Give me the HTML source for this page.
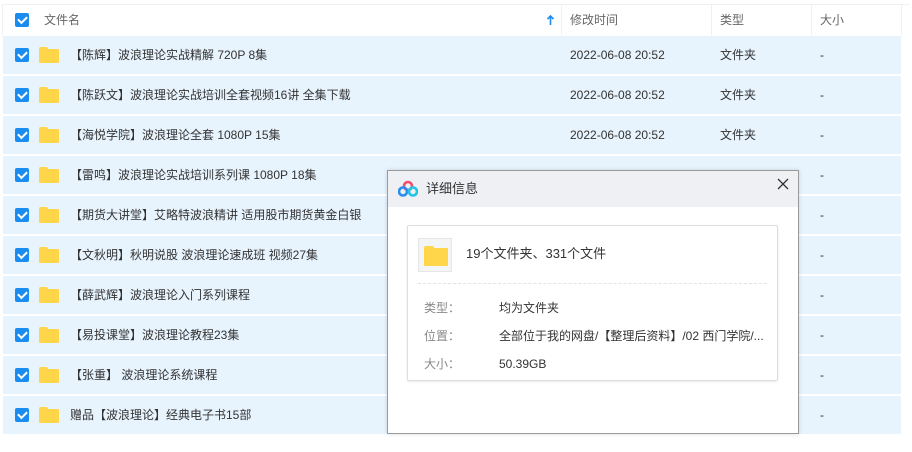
<!DOCTYPE html>
<html><head><meta charset="utf-8">
<style>
*{margin:0;padding:0;box-sizing:border-box}
body{width:912px;height:452px;background:#fff;position:relative;overflow:hidden;font-family:"Liberation Sans","Noto Sans CJK SC",sans-serif;font-size:12px;color:#333}
.hdr{position:absolute;left:2px;top:4px;width:908px;height:31px;border-top:1px solid #eef0f2;border-left:1px solid #eef0f2;color:#666}
.hdr span{position:absolute;top:0;line-height:30px}
.vl{position:absolute;top:0;width:1px;height:30px;background:#eef0f2}
.cb{position:absolute;width:14px;height:14px;background:#1a8cf0;border-radius:2px}
.cb:after{content:"";position:absolute;left:3px;top:3px;width:7px;height:4px;border-left:2px solid #fff;border-bottom:2px solid #fff;transform:rotate(-45deg)}
.row{position:absolute;left:3px;width:898px;height:38px;background:#e7f3fd}
.row span{position:absolute;top:0;line-height:38px;white-space:nowrap}
.fd{position:absolute;left:36px;top:11px;width:20px;height:16px}
.fd:before{content:"";position:absolute;left:0;top:0;width:9px;height:4px;background:#ffd54a;border-radius:2px 2px 0 0}
.fd:after{content:"";position:absolute;left:0;top:2px;width:20px;height:14px;background:#ffd54a;border-radius:1px}
.dlg{position:absolute;left:387px;top:170px;width:412px;height:264px;background:#fff;border:1px solid #9a9a9a;box-shadow:0 0 4px rgba(0,0,0,.15)}
.tb{height:36px;background:#eef0f4;position:relative}
.tb .t{position:absolute;left:38px;top:0;line-height:36px;font-size:13px;color:#333}
.box{position:absolute;left:19px;top:54px;width:371px;height:156px;border:1px solid #ddd;border-radius:2px;box-shadow:0 1px 2px rgba(0,0,0,.08)}
.lab,.val{position:absolute;line-height:20px;white-space:nowrap}
.lab{left:16px;color:#888}
.val{left:91px;color:#333}
</style></head><body>
<div class="hdr">
<div class="cb" style="left:12px;top:8px"></div>
<span style="left:41px">文件名</span>
<svg style="position:absolute;left:544px;top:10px" width="7" height="10" viewBox="0 0 7 10"><path d="M3.5 1V10M0.5 4L3.5 1L6.5 4" stroke="#1a8cf0" stroke-width="1.6" fill="none"/></svg>
<div class="vl" style="left:558px"></div>
<span style="left:567px">修改时间</span>
<div class="vl" style="left:708px"></div>
<span style="left:717px">类型</span>
<div class="vl" style="left:808px"></div>
<span style="left:817px">大小</span>
<div class="vl" style="left:898px"></div>
</div>

<div class="row" style="top:36px"><div class="cb" style="left:12px;top:12px"></div><div class="fd"></div><span style="left:67px">【陈辉】波浪理论实战精解 720P 8集</span><span style="left:567px">2022-06-08 20:52</span><span style="left:717px">文件夹</span><span style="left:817px">-</span></div>
<div class="row" style="top:76px"><div class="cb" style="left:12px;top:12px"></div><div class="fd"></div><span style="left:67px">【陈跃文】波浪理论实战培训全套视频16讲 全集下载</span><span style="left:567px">2022-06-08 20:52</span><span style="left:717px">文件夹</span><span style="left:817px">-</span></div>
<div class="row" style="top:116px"><div class="cb" style="left:12px;top:12px"></div><div class="fd"></div><span style="left:67px">【海悦学院】波浪理论全套 1080P 15集</span><span style="left:567px">2022-06-08 20:52</span><span style="left:717px">文件夹</span><span style="left:817px">-</span></div>
<div class="row" style="top:156px"><div class="cb" style="left:12px;top:12px"></div><div class="fd"></div><span style="left:67px">【雷鸣】波浪理论实战培训系列课 1080P 18集</span><span style="left:817px">-</span></div>
<div class="row" style="top:196px"><div class="cb" style="left:12px;top:12px"></div><div class="fd"></div><span style="left:67px">【期货大讲堂】艾略特波浪精讲 适用股市期货黄金白银</span><span style="left:817px">-</span></div>
<div class="row" style="top:236px"><div class="cb" style="left:12px;top:12px"></div><div class="fd"></div><span style="left:67px">【文秋明】秋明说股 波浪理论速成班 视频27集</span><span style="left:817px">-</span></div>
<div class="row" style="top:276px"><div class="cb" style="left:12px;top:12px"></div><div class="fd"></div><span style="left:67px">【薛武辉】波浪理论入门系列课程</span><span style="left:817px">-</span></div>
<div class="row" style="top:316px"><div class="cb" style="left:12px;top:12px"></div><div class="fd"></div><span style="left:67px">【易投课堂】波浪理论教程23集</span><span style="left:817px">-</span></div>
<div class="row" style="top:356px"><div class="cb" style="left:12px;top:12px"></div><div class="fd"></div><span style="left:67px">【张重】 波浪理论系统课程</span><span style="left:817px">-</span></div>
<div class="row" style="top:396px"><div class="cb" style="left:12px;top:12px"></div><div class="fd"></div><span style="left:67px">赠品【波浪理论】经典电子书15部</span><span style="left:817px">-</span></div>

<div class="dlg">
<div class="tb">
<svg style="position:absolute;left:10px;top:9px" width="20" height="18" viewBox="0 0 20 18">
<circle cx="10" cy="6" r="4" fill="none" stroke="#f0506e" stroke-width="2.6"/>
<circle cx="5" cy="11.5" r="4" fill="none" stroke="#2a8cf0" stroke-width="2.6"/>
<circle cx="15" cy="11.5" r="4" fill="none" stroke="#1fc4e8" stroke-width="2.6"/>
</svg>
<span class="t">详细信息</span>
<svg style="position:absolute;left:389px;top:7px" width="12" height="12" viewBox="0 0 12 12"><path d="M1 1L11 11M11 1L1 11" stroke="#333" stroke-width="1.3"/></svg>
</div>
<div class="box">
<div style="position:absolute;left:10px;top:12px;width:34px;height:34px;border:1px solid #e6e6e6;background:#f3f5f7">
<div style="position:absolute;left:5px;top:7px;width:10px;height:4px;background:#ffd54a;border-radius:2px 2px 0 0"></div>
<div style="position:absolute;left:5px;top:9px;width:24px;height:18px;background:#ffd54a;border-radius:1px"></div>
</div>
<span style="position:absolute;left:58px;top:18px;line-height:20px;font-size:13px">19个文件夹、331个文件</span>
<div style="position:absolute;left:10px;right:10px;top:57px;border-top:1px dashed #e3e3e3"></div>
<span class="lab" style="top:72px">类型：</span><span class="val" style="top:72px">均为文件夹</span>
<span class="lab" style="top:100px">位置：</span><span class="val" style="top:100px">全部位于我的网盘/【整理后资料】/02 西门学院/...</span>
<span class="lab" style="top:128px">大小：</span><span class="val" style="top:128px">50.39GB</span>
</div>
</div>
</body></html>
